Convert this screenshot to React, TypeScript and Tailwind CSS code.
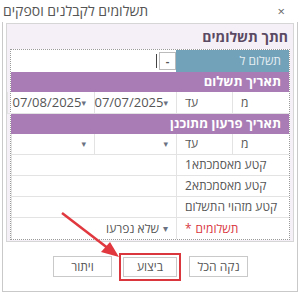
import React from "react";

const font = { fontFamily: '"Open Sans", "DejaVu Sans", "Liberation Sans", sans-serif' };

function Caret() {
  return <span className="text-[9px] text-gray-500">▾</span>;
}

function Cell({ children, className = "" }: { children?: React.ReactNode; className?: string }) {
  return (
    <div className={`flex items-center px-2 border-l border-b border-[#e3e3e3] text-[12px] text-[#555] ${className}`}>
      {children}
    </div>
  );
}

export default function App() {
  return (
    <div className="w-[300px] h-[293px] bg-white relative overflow-hidden" style={font}>
      {/* title bar */}
      <div className="h-[22px] flex items-center justify-between px-[3px]">
        <span className="text-[14px] text-[#555] leading-none">תשלומים לקבלנים וספקים</span>
        <span className="text-[13px] text-[#666] mr-[12px] leading-none">×</span>
      </div>

      <div className="h-[270px] mx-[2px] border-x border-b border-[#c9c9c9] px-[3px] pt-px">
        {/* panel */}
        <div dir="rtl" className="h-[219px] bg-[#f5f0f7] border border-[#d6d6d6] px-[3px] pb-[2px]">
          <div className="h-[25px] flex items-center pr-[2px] text-[14px] font-bold text-[#5b4a63]">חתך תשלומים</div>
          <div className="bg-white border border-dotted border-[#9a9a9a]">
            {/* row 1 */}
            <div className="flex h-[22px]">
              <div className="w-[113px] bg-[#72a2b9] flex items-center px-2 text-[12px] text-[#e6eef3]">תשלום ל</div>
              <div className="w-[17px] flex items-center justify-center border border-[#bbb] my-[2px] text-[11px] font-bold text-[#555]">-</div>
              <div className="flex-1 flex items-center">
                <span className="w-px h-[14px] bg-[#444] mr-[2px]"></span>
              </div>
            </div>
            {/* purple header */}
            <div className="h-[20px] bg-[#a97cb5] flex items-center px-2 text-[13px] font-bold text-white">תאריך תשלום</div>
            <div className="grid grid-cols-[57px_56px_82px_1fr] h-[22px]">
              <Cell className="justify-end">מ</Cell>
              <Cell className="justify-end">עד</Cell>
              <Cell className="justify-between !text-[13px] !pl-1">
                <Caret />
                <span dir="ltr">07/07/2025</span>
              </Cell>
              <Cell className="justify-between !text-[13px] !pl-1">
                <Caret />
                <span dir="ltr">07/08/2025</span>
              </Cell>
            </div>
            <div className="h-[20px] bg-[#a97cb5] flex items-center px-2 text-[13px] font-bold text-white">תאריך פרעון מתוכנן</div>
            <div className="grid grid-cols-[57px_56px_82px_1fr] h-[21px]">
              <Cell className="justify-end">מ</Cell>
              <Cell className="justify-end">עד</Cell>
              <Cell className="justify-start"><Caret /></Cell>
              <Cell className="justify-start"><Caret /></Cell>
            </div>
            {["קטע מאסמכתא1", "קטע מאסמכתא2", "קטע מזהוי התשלום"].map((t) => (
              <div key={t} className="grid grid-cols-[113px_1fr] h-[21px]">
                <Cell className="justify-end">{t}</Cell>
                <Cell />
              </div>
            ))}
            <div className="grid grid-cols-[113px_1fr] h-[21px]">
              <Cell className="justify-end !text-[#d9363e] !border-b-0">
                <span>תשלומים</span>
                <span className="mr-1">*</span>
              </Cell>
              <Cell className="!border-b-0">
                <span className="text-[10px] text-gray-500 ml-1">▾</span>
                <span>שלא נפרעו</span>
              </Cell>
            </div>
          </div>
        </div>

        {/* buttons */}
        <div className="flex items-center h-[47px] pl-[47px] gap-[7px] pt-[2px]">
          <button className="w-[59px] h-[21px] border border-[#c9c9c9] bg-white text-[12px] text-[#555]">ויתור</button>
          <button className="w-[62px] h-[28px] border-2 border-[#d9363e] bg-white text-[12px] text-[#555] flex items-center justify-center">
            <span className="w-[54px] h-[20px] border border-[#c9c9c9] flex items-center justify-center">ביצוע</span>
          </button>
          <button className="w-[59px] h-[21px] border border-[#c9c9c9] bg-white text-[12px] text-[#555] ml-px">נקה הכל</button>
        </div>
      </div>

      {/* arrow overlay */}
      <svg className="absolute left-0 top-0 pointer-events-none" width="300" height="293">
        <line x1="62" y1="213" x2="109" y2="249" stroke="#e0383e" strokeWidth="2.5" />
        <polygon points="119,257 101,252 110,242" fill="#e0383e" />
      </svg>
    </div>
  );
}
